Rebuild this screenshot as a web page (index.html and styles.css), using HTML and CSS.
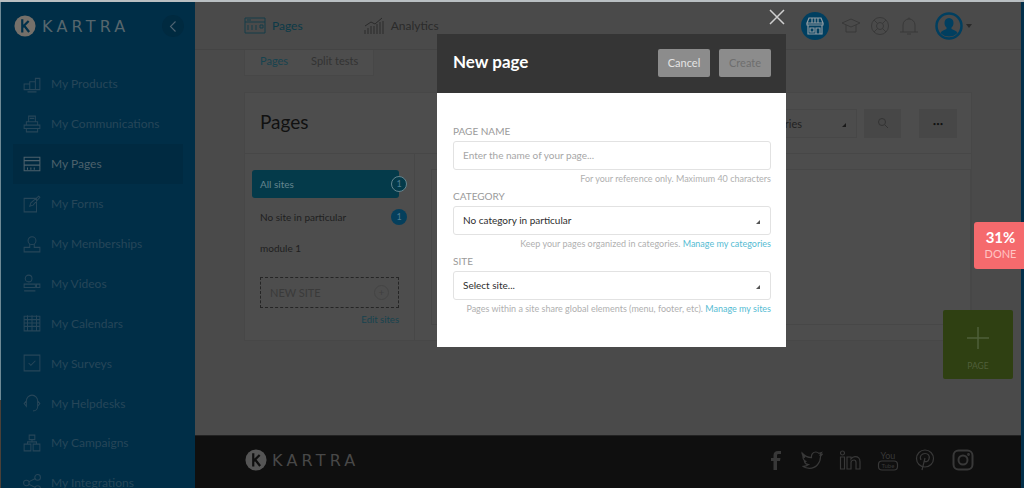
FILE: index.html
```html
<!DOCTYPE html>
<html lang="en">
  <head>
    <meta charset="UTF-8" />
    <meta name="viewport" content="width=device-width, initial-scale=1.0" />
    <title>Kartra - Pages</title>
    <link rel="stylesheet" href="styles.css">
  </head>

  <body>
    <div class="app">
      <div class="edge-left"></div>

      <!-- sidebar -->
      <aside class="sidebar">
        <div class="brand">
          <svg class="logo" viewBox="0 0 24 24" width="22" height="22">
            <circle cx="12" cy="12" r="11.5" fill="#75706a" />
            <path d="M9 4.5V19M9 13.5L16 6.5M11 11.5L16.5 18.5" stroke="#00304a" stroke-width="2.4" fill="none" />
          </svg>
          <span class="brand-name">KARTRA</span>
          <span class="collapse">
            <svg viewBox="0 0 12 14" width="10" height="13"><path d="M9 1L3 7l6 6" stroke="#4f6472" stroke-width="1.3" fill="none" /></svg>
          </span>
        </div>
        <nav class="menu">
          <a class="menu-item">
            <svg class="menu-icon" viewBox="0 0 16 16"><path d="M1 8h5v5H1zM6 6h5v7H6zM11 3h4v10h-4zM4 15h8" /></svg>
            My Products
          </a>
          <a class="menu-item">
            <svg class="menu-icon" viewBox="0 0 16 16"><path d="M5 1h6v5H5zM3 6h10v3H3zM1 9h14v3H1zM3 12h10v3H3zM6 3h4" /></svg>
            My Communications
          </a>
          <a class="menu-item active">
            <svg class="menu-icon" viewBox="0 0 16 16"><path d="M1 2h14v12H1zM1 5h14M1 9h14M4 11v2M7 11v2M10 11v2" /></svg>
            My Pages
          </a>
          <a class="menu-item">
            <svg class="menu-icon" viewBox="0 0 16 16"><path d="M1 3h11v12H1zM6 10l1-3 7-6 1 1-6 7z" /></svg>
            My Forms
          </a>
          <a class="menu-item">
            <svg class="menu-icon" viewBox="0 0 16 16"><circle cx="8" cy="5" r="3.5" /><path d="M6 8v3H1v4h14v-4h-5V8" /></svg>
            My Memberships
          </a>
          <a class="menu-item">
            <svg class="menu-icon" viewBox="0 0 16 16"><circle cx="5" cy="4" r="3" /><path d="M1 9h10v3H1zM12 9h3v3h-3zM1 15h10" /></svg>
            My Videos
          </a>
          <a class="menu-item">
            <svg class="menu-icon" viewBox="0 0 16 16"><path d="M1 2h14v13H1zM1 5h14M1 8h14M1 11h14M4 1v14M8 1v14M12 1v14" /></svg>
            My Calendars
          </a>
          <a class="menu-item">
            <svg class="menu-icon" viewBox="0 0 16 16"><path d="M1 1h14v14H1zM5 8l2 2 4-4" /></svg>
            My Surveys
          </a>
          <a class="menu-item">
            <svg class="menu-icon" viewBox="0 0 16 16"><path d="M3 6a5 5 0 0 1 10 0v5a4 4 0 0 1-4 4M3 6L1 8.5 3 11zM13 6l2 2.5-2 2.5z" /></svg>
            My Helpdesks
          </a>
          <a class="menu-item">
            <svg class="menu-icon" viewBox="0 0 16 16"><path d="M5.5 1h5v4h-5zM1 9h6v6H1zM9 9h6v6H9zM4 9V7h8v2M8 5v2" /></svg>
            My Campaigns
          </a>
          <a class="menu-item">
            <svg class="menu-icon" viewBox="0 0 16 16"><circle cx="3" cy="8" r="2.5" /><circle cx="13" cy="3" r="2.5" /><circle cx="13" cy="13" r="2.5" /><path d="M5 7l6-3M5 9l6 3" /></svg>
            My Integrations
          </a>
        </nav>
      </aside>

      <!-- main column -->
      <div class="main">
        <header class="topbar">
          <a class="top-link current">
            <svg class="top-icon" viewBox="0 0 22 18"><path d="M1 1h20v15H1zM1 5h20M3 3h4M4 8v5M8 8v5M12 8v5M16 8h3v3h-3z" /></svg>
            Pages
          </a>
          <a class="top-link">
            <svg class="top-icon" viewBox="0 0 22 18"><path d="M2 17v-4M5 17v-6M8 17v-8M11 17V9M14 17V7M17 17V5M20 17V4M2 9l6-4 4 2 7-6" /></svg>
            Analytics
          </a>
          <div class="top-icons">
            <span class="store-badge">
              <svg viewBox="0 0 20 20" width="20" height="20"><path d="M2 7l2-5h12l2 5zM2 7v2h16V7M3 9v9h14V9M5 12h4v4H5zM11 12h4v6h-4zM7 2v5M10 2v5M13 2v5" /></svg>
            </span>
            <svg class="head-icon" viewBox="0 0 20 20"><path d="M1 7l9-4 9 4-9 4zM5 9v7h10V9" /></svg>
            <svg class="head-icon" viewBox="0 0 20 20"><circle cx="10" cy="10" r="8.5" /><circle cx="10" cy="10" r="3.5" /><path d="M4 4l3.5 3.5M16 4l-3.5 3.5M4 16l3.5-3.5M16 16l-3.5-3.5" /></svg>
            <svg class="head-icon" viewBox="0 0 20 20"><path d="M1 16h18M4 16V9a6 6 0 0 1 12 0v7M9 3a1 1 0 0 1 2 0M8 18h4" /></svg>
            <span class="avatar">
              <svg viewBox="0 0 28 28" width="28" height="28">
                <circle cx="14" cy="14" r="12.5" fill="#4a4a4a" stroke="#003f60" stroke-width="2.5" />
                <path d="M14 6c-3 0-4.5 2.2-4.5 5 0 2 1 3.5 2 4.5v1.5c-2 1-5 1.5-6 4a12 12 0 0 0 17 0c-1-2.500-4-3-6-4v-1.500c1-1 2-2.500 2-4.500 0-2.800-1.500-5-4.500-5z" fill="#003f60" />
              </svg>
            </span>
            <span class="avatar-caret"></span>
          </div>
        </header>

        <div class="content">
          <div class="tabs">
            <span class="tab current">Pages</span>
            <span class="tab">Split tests</span>
          </div>

          <section class="card">
            <div class="card-head">
              <h1 class="card-title">Pages</h1>
              <div class="card-tools">
                <div class="fake-select">All categories<span class="caret dim"></span></div>
                <span class="tool-btn">
                  <svg viewBox="0 0 12 12" width="12" height="12"><circle cx="5" cy="5" r="3.5" fill="none" stroke="#333" /><path d="M8 8l3 3" stroke="#333" /></svg>
                </span>
                <span class="tool-btn more">&bull;&bull;&bull;</span>
              </div>
            </div>
            <div class="card-body">
              <div class="sites">
                <div class="site selected">All sites<span class="count">1</span></div>
                <div class="site">No site in particular<span class="count">1</span></div>
                <div class="site">module 1</div>
                <div class="new-site">NEW SITE<span class="plus-ring">+</span></div>
                <a class="edit-sites">Edit sites</a>
              </div>
              <div class="pages-list"></div>
            </div>
          </section>
        </div>

        <footer class="footer">
          <div class="foot-brand">
            <svg viewBox="0 0 24 24" width="22" height="22">
              <circle cx="12" cy="12" r="11.5" fill="#555" />
              <path d="M9 4.5V19M9 13.5L16 6.5M11 11.5L16.5 18.5" stroke="#0f0f0f" stroke-width="2.4" fill="none" />
            </svg>
            <span class="foot-name">KARTRA</span>
          </div>
          <div class="socials">
            <svg class="social" viewBox="0 0 22 22"><path d="M13 21v-9h3l.5-3H13V6.500c0-1 .5-1.500 1.500-1.500H17V2h-3c-3 0-4.500 1.500-4.500 4.500V9H7v3h2.500v9z" fill="#383838" stroke="none" /></svg>
            <svg class="social" viewBox="0 0 22 22"><path d="M1 4c2.500 3 5.500 4.500 9.500 4.700C10 5.500 12 3 14.800 3c1.300 0 2.400.6 3.200 1.400L20.500 3.500l-1.300 2.300 2-.5-1.700 2c.2 6.500-4.500 12-11 12-2.800 0-5-.8-7-2 2.300.2 4.300-.4 6-1.700C5.500 15.500 4 14.500 3.500 12.500h2C3.500 12 2 10.200 2 8l2 .5C2 7.200 .8 6 1 4z" /></svg>
            <svg class="social" viewBox="0 0 22 22"><circle cx="3.500" cy="4" r="2" /><path d="M1.500 8h4v12h-4zM8 8h4v2c1-1.500 2.500-2.300 4-2.300 3 0 5 1.800 5 5V20h-4v-6.500c0-1.500-.7-2.500-2-2.500s-3 1-3 2.500V20H8z" /></svg>
            <svg class="social" viewBox="0 0 22 22">
              <rect x="1.500" y="12" width="19" height="9" rx="3.500" />
              <text x="11" y="9.500" class="yt-text">You</text>
              <text x="11" y="19" class="yt-text small">Tube</text>
            </svg>
            <svg class="social" viewBox="0 0 22 22"><circle cx="11" cy="9.500" r="8.500" /><path d="M8 21l3-12M7 11c-2-4 1-6.500 4-6.500s5 2 4 5.500c-.7 2.800-4 3.500-5 1.500" /></svg>
            <svg class="social" viewBox="0 0 22 22"><rect x="1.500" y="1.500" width="19" height="19" rx="5" stroke-width="2" /><circle cx="11" cy="11" r="4.500" stroke-width="2" /><circle cx="16.500" cy="5.500" r=".8" /></svg>
          </div>
        </footer>
      </div>

      <div class="edge-right"></div>
    </div>

    <!-- things on top of the page -->
    <span class="close-x">
      <svg viewBox="0 0 16 16" width="16" height="16"><path d="M1 1l14 14M15 1L1 15" stroke="#cfcfcf" stroke-width="1.5" /></svg>
    </span>

    <div class="progress"><b>31%</b><span>DONE</span></div>

    <div class="add-page">
      <svg viewBox="0 0 22 22" width="22" height="22"><path d="M11 0v22M0 11h22" stroke="#4f5f3a" stroke-width="1.5" /></svg>
      <span>PAGE</span>
    </div>

    <div class="modal">
      <div class="modal-head">
        <h2 class="modal-title">New page</h2>
        <span class="btn cancel">Cancel</span>
        <span class="btn create">Create</span>
      </div>
      <div class="modal-body">
        <label class="field-label">PAGE NAME</label>
        <div class="field placeholder">Enter the name of your page...</div>
        <p class="hint">For your reference only. Maximum 40 characters</p>

        <label class="field-label">CATEGORY</label>
        <div class="field">No category in particular<span class="caret"></span></div>
        <p class="hint">Keep your pages organized in categories. <a>Manage my categories</a></p>

        <label class="field-label">SITE</label>
        <div class="field">Select site...<span class="caret"></span></div>
        <p class="hint">Pages within a site share global elements (menu, footer, etc). <a>Manage my sites</a></p>
      </div>
    </div>
  </body>
</html>
```

FILE: styles.css
```css
* {
  box-sizing: border-box;
}

html,
body {
  margin: 0;
  height: 488px;
  overflow: hidden;
}

body {
  font-family: Lato, "Open Sans", sans-serif;
  background: #4a4a4a;
  border-top: 2px solid #b9bfc2;
  position: relative;
}

.app {
  display: flex;
  height: 486px;
}

.edge-left {
  width: 1px;
  background: linear-gradient(#6e8a96 398px, #4a4038 398px);
}

.edge-right {
  width: 3px;
  background: #03304a;
}

/* sidebar */
.sidebar {
  width: 194px;
  background: #002e47;
  overflow: hidden;
}

.brand {
  display: flex;
  align-items: center;
  height: 48px;
  padding: 0 11px 0 13px;
}

.brand-name {
  margin-left: 6px;
  font-family: "DejaVu Sans", sans-serif;
  font-size: 16px;
  letter-spacing: 4.2px;
  color: #56666d;
}

.collapse {
  margin-left: auto;
  width: 22px;
  height: 22px;
  border-radius: 50%;
  background: #002a40;
  display: flex;
  align-items: center;
  justify-content: center;
}

.menu {
  padding: 14px 12px 0;
}

.menu-item {
  display: flex;
  align-items: center;
  height: 39.9px;
  padding-left: 10px;
  font-size: 12px;
  color: #264659;
}

.menu-item.active {
  background: #002a41;
  color: #4c616c;
}

.menu-icon {
  width: 18px;
  height: 18px;
  margin-right: 10px;
  fill: none;
  stroke: #264659;
  stroke-width: .9;
}

.active .menu-icon {
  stroke: #4c616c;
}

/* main */
.main {
  flex: 1;
  display: flex;
  flex-direction: column;
  min-width: 0;
}

.topbar {
  height: 48px;
  flex: none;
  display: flex;
  align-items: center;
  padding-left: 49px;
  border-bottom: 1px solid #444;
}

.top-link {
  display: flex;
  align-items: center;
  gap: 6px;
  margin-right: 60px;
  font-size: 12px;
  color: #2b2b2b;
}

.top-link.current {
  color: #0c3a48;
}

.top-icon {
  width: 22px;
  height: 18px;
  fill: none;
  stroke: #2a2a2a;
  stroke-width: 1;
}

.current .top-icon {
  stroke: #143c48;
}

.top-icons {
  margin-left: auto;
  display: flex;
  align-items: center;
  gap: 9px;
  padding-right: 49px;
}

.store-badge {
  width: 28px;
  height: 28px;
  margin-right: 3px;
  border-radius: 50%;
  background: #003f60;
  display: flex;
  align-items: center;
  justify-content: center;
}

.store-badge svg {
  fill: none;
  stroke: #8f9ba1;
  stroke-width: 1.2;
}

.head-icon {
  width: 20px;
  height: 20px;
  fill: none;
  stroke: #393939;
  stroke-width: 1;
}

.avatar {
  margin-left: 7px;
  display: flex;
}

.avatar-caret {
  margin-left: -6px;
  border: 3px solid transparent;
  border-top: 4px solid #2a2a2a;
  margin-top: 4px;
}

.content {
  flex: 1;
  padding: 0 49px;
  min-height: 0;
}

.tabs {
  display: inline-flex;
  gap: 23px;
  height: 26px;
  align-items: center;
  padding: 0 15px 4px;
  background: #4d4d4d;
  border: 1px solid #474747;
  border-top: 0;
  font-size: 11px;
  color: #333;
  vertical-align: top;
}

.tab.current {
  color: #17434f;
}

.card {
  margin-top: 16px;
  height: 249px;
  background: #4d4d4d;
  border: 1px solid #474747;
}

.card-head {
  display: flex;
  align-items: center;
  height: 61px;
  padding: 0 14px 0 15px;
  border-bottom: 1px solid #474747;
}

.card-title {
  margin: 0 0 3px;
  font-size: 19px;
  font-weight: 400;
  color: #111;
}

.card-tools {
  margin-left: auto;
  display: flex;
  align-items: center;
  gap: 8px;
  margin-right: 0;
}

.fake-select {
  position: relative;
  width: 157px;
  height: 29px;
  margin-right: -1px;
  padding: 7px 54px 7px 10px;
  background: #4c4c4c;
  border: 1px solid #474747;
  font-size: 11px;
  color: #222;
  text-align: right;
}

.tool-btn {
  width: 37px;
  height: 29px;
  background: #474747;
  display: flex;
  align-items: center;
  justify-content: center;
}

.tool-btn.more {
  margin-left: 10px;
  width: 38px;
  font-size: 6px;
  color: #111;
}

.card-body {
  display: flex;
  height: 187px;
}

.sites {
  width: 170px;
  padding: 16px 0 0 7px;
  border-right: 1px solid #474747;
  flex: none;
}

.site {
  position: relative;
  height: 31px;
  width: 147px;
  display: flex;
  align-items: center;
  padding-left: 8px;
  font-size: 10px;
  color: #1f1f1f;
}

.site.selected {
  height: 28px;
  margin-bottom: 3px;
  background: #043a4a;
  border-radius: 3px;
  color: #64858f;
}

.count {
  position: absolute;
  right: -8px;
  top: 50%;
  margin-top: -8px;
  width: 16px;
  height: 16px;
  border-radius: 50%;
  background: #053f5c;
  color: #4e7c90;
  font-size: 9px;
  text-align: center;
  line-height: 16px;
}

.selected .count {
  background: #043a4a;
  border: 1px solid #64858f;
  line-height: 14px;
}

.new-site {
  margin: 14px 0 0 8px;
  width: 139px;
  height: 31px;
  border: 1px dashed #252525;
  display: flex;
  align-items: center;
  justify-content: space-between;
  padding: 0 9px;
  font-size: 11px;
  color: #3a3a3a;
}

.plus-ring {
  width: 15px;
  height: 15px;
  border: 1px solid #444;
  border-radius: 50%;
  font-size: 10px;
  line-height: 13px;
  text-align: center;
  color: #3f3f3f;
}

.edit-sites {
  display: block;
  width: 147px;
  margin-top: 6px;
  font-size: 9.5px;
  text-align: right;
  color: #17434f;
}

.pages-list {
  margin: 15px 0 16px 16px;
  flex: 1;
  border: 1px solid #474747;
}

.footer {
  height: 53px;
  flex: none;
  background: #0f0f0f;
  display: flex;
  align-items: center;
  justify-content: space-between;
  padding: 0 47px 4px 50px;
  border-top: 1px solid #222;
}

.foot-brand {
  display: flex;
  align-items: center;
  gap: 5px;
}

.foot-name {
  font-family: "DejaVu Sans", sans-serif;
  font-size: 16px;
  letter-spacing: 4.2px;
  color: #484848;
}

.socials {
  display: flex;
  gap: 15.7px;
}

.social {
  width: 22px;
  height: 22px;
  fill: none;
  stroke: #383838;
  stroke-width: 1.2;
}

.yt-text {
  font-size: 9px;
  text-anchor: middle;
  fill: #383838;
  stroke: none;
}

.yt-text.small {
  font-size: 6px;
}

/* over the page */
.close-x {
  position: absolute;
  left: 769px;
  top: 7px;
  display: flex;
}

.progress {
  position: absolute;
  left: 974px;
  top: 220px;
  width: 50px;
  height: 47px;
  padding: 5px 0 0 3px;
  background: #f56a6d;
  border-radius: 3px 0 0 3px;
  text-align: center;
  color: #fff;
}

.progress b {
  display: block;
  font-size: 15px;
  line-height: 20px;
}

.progress span {
  display: block;
  font-size: 11px;
  line-height: 13px;
  color: #ffc4c4;
}

.add-page {
  position: absolute;
  left: 943px;
  top: 308px;
  width: 70px;
  height: 69px;
  background: #2f4012;
  border-radius: 2px;
  display: flex;
  flex-direction: column;
  align-items: center;
  padding-top: 17px;
  gap: 12px;
}

.add-page span {
  font-size: 8.5px;
  color: #4f5f3a;
}

/* modal */
.modal {
  position: absolute;
  left: 437px;
  top: 32px;
  width: 349px;
  height: 313px;
  background: #fff;
}

.modal-head {
  display: flex;
  align-items: center;
  height: 59px;
  padding: 0 15px 2px 16px;
  background: #353535;
}

.modal-title {
  margin: 0 auto 2px 0;
  font-size: 17px;
  font-weight: 700;
  color: #fff;
}

.btn {
  width: 52px;
  height: 28px;
  margin-left: 9px;
  border-radius: 2px;
  background: #8c8c8c;
  color: #e4e4e4;
  font-size: 11px;
  line-height: 28px;
  text-align: center;
}

.btn.create {
  color: #6e6e6e;
}

.modal-body {
  padding: 31px 15px 0 16px;
}

.field-label {
  display: block;
  font-size: 10px;
  line-height: 14px;
  color: #9a9a9a;
}

.field {
  position: relative;
  height: 29px;
  margin-top: 3px;
  padding: 0 9px;
  border: 1px solid #e2e2e2;
  border-radius: 3px;
  font-size: 10px;
  line-height: 27px;
  color: #2e2e2e;
}

.field.placeholder {
  color: #a6a6a6;
}

.caret {
  position: absolute;
  right: 10px;
  top: 13px;
  border-style: solid;
  border-width: 0 0 4px 4px;
  border-color: transparent transparent #555 transparent;
}

.caret.dim {
  border-color: transparent transparent #1a1a1a transparent;
}

.hint {
  margin: 3px 0 4px;
  font-size: 9px;
  line-height: 12px;
  white-space: nowrap;
  text-align: right;
  color: #b0b0b0;
}

.hint a {
  color: #56bcd3;
}
```
